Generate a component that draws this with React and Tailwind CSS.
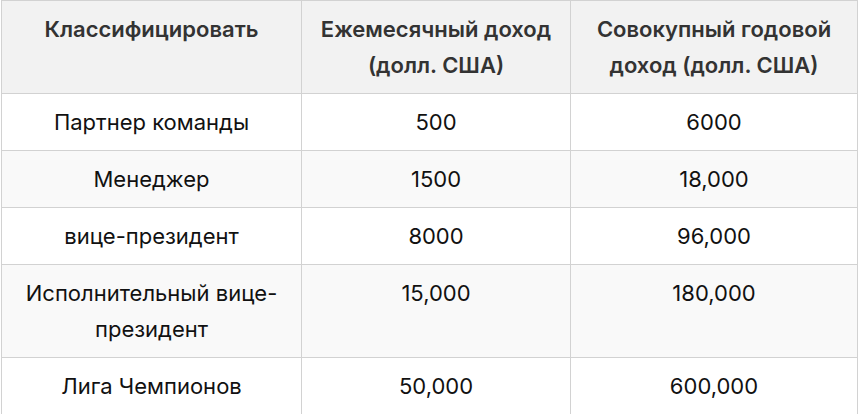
const rows = [
  { rank: "Партнер команды", monthly: "500", yearly: "6000" },
  { rank: "Менеджер", monthly: "1500", yearly: "18,000" },
  { rank: "вице-президент", monthly: "8000", yearly: "96,000" },
  { rank: "Исполнительный вице-президент", monthly: "15,000", yearly: "180,000" },
  { rank: "Лига Чемпионов", monthly: "50,000", yearly: "600,000" },
];

export default function App() {
  return (
    <div className="w-[858px] h-[414px] overflow-hidden bg-white pl-px" style={{ fontFamily: "Inter, 'Noto Sans', sans-serif" }}>
      <table className="w-[856px] table-fixed border-collapse text-[22px] leading-[36px] text-[#111]">
        <colgroup>
          <col className="w-[300px]" />
          <col className="w-[269px]" />
          <col className="w-[287px]" />
        </colgroup>
        <thead>
          <tr className="bg-[#f2f2f2]">
            <th className="border border-[#d2d2d2] px-3 py-[10px] align-top font-semibold text-[#333]">
              Классифицировать
            </th>
            <th className="border border-[#d2d2d2] px-3 py-[10px] align-top font-semibold text-[#333]">
              Ежемесячный доход (долл. США)
            </th>
            <th className="border border-[#d2d2d2] px-3 py-[10px] align-top font-semibold text-[#333]">
              Совокупный годовой доход (долл. США)
            </th>
          </tr>
        </thead>
        <tbody>
          {rows.map((r, i) => (
            <tr key={i} className={i % 2 === 1 ? "bg-[#f9f9f9]" : "bg-white"}>
              <td className="border border-[#d2d2d2] px-3 py-[10px] text-center align-top">{r.rank}</td>
              <td className="border border-[#d2d2d2] px-3 py-[10px] text-center align-top">{r.monthly}</td>
              <td className="border border-[#d2d2d2] px-3 py-[10px] text-center align-top">{r.yearly}</td>
            </tr>
          ))}
        </tbody>
      </table>
    </div>
  );
}
